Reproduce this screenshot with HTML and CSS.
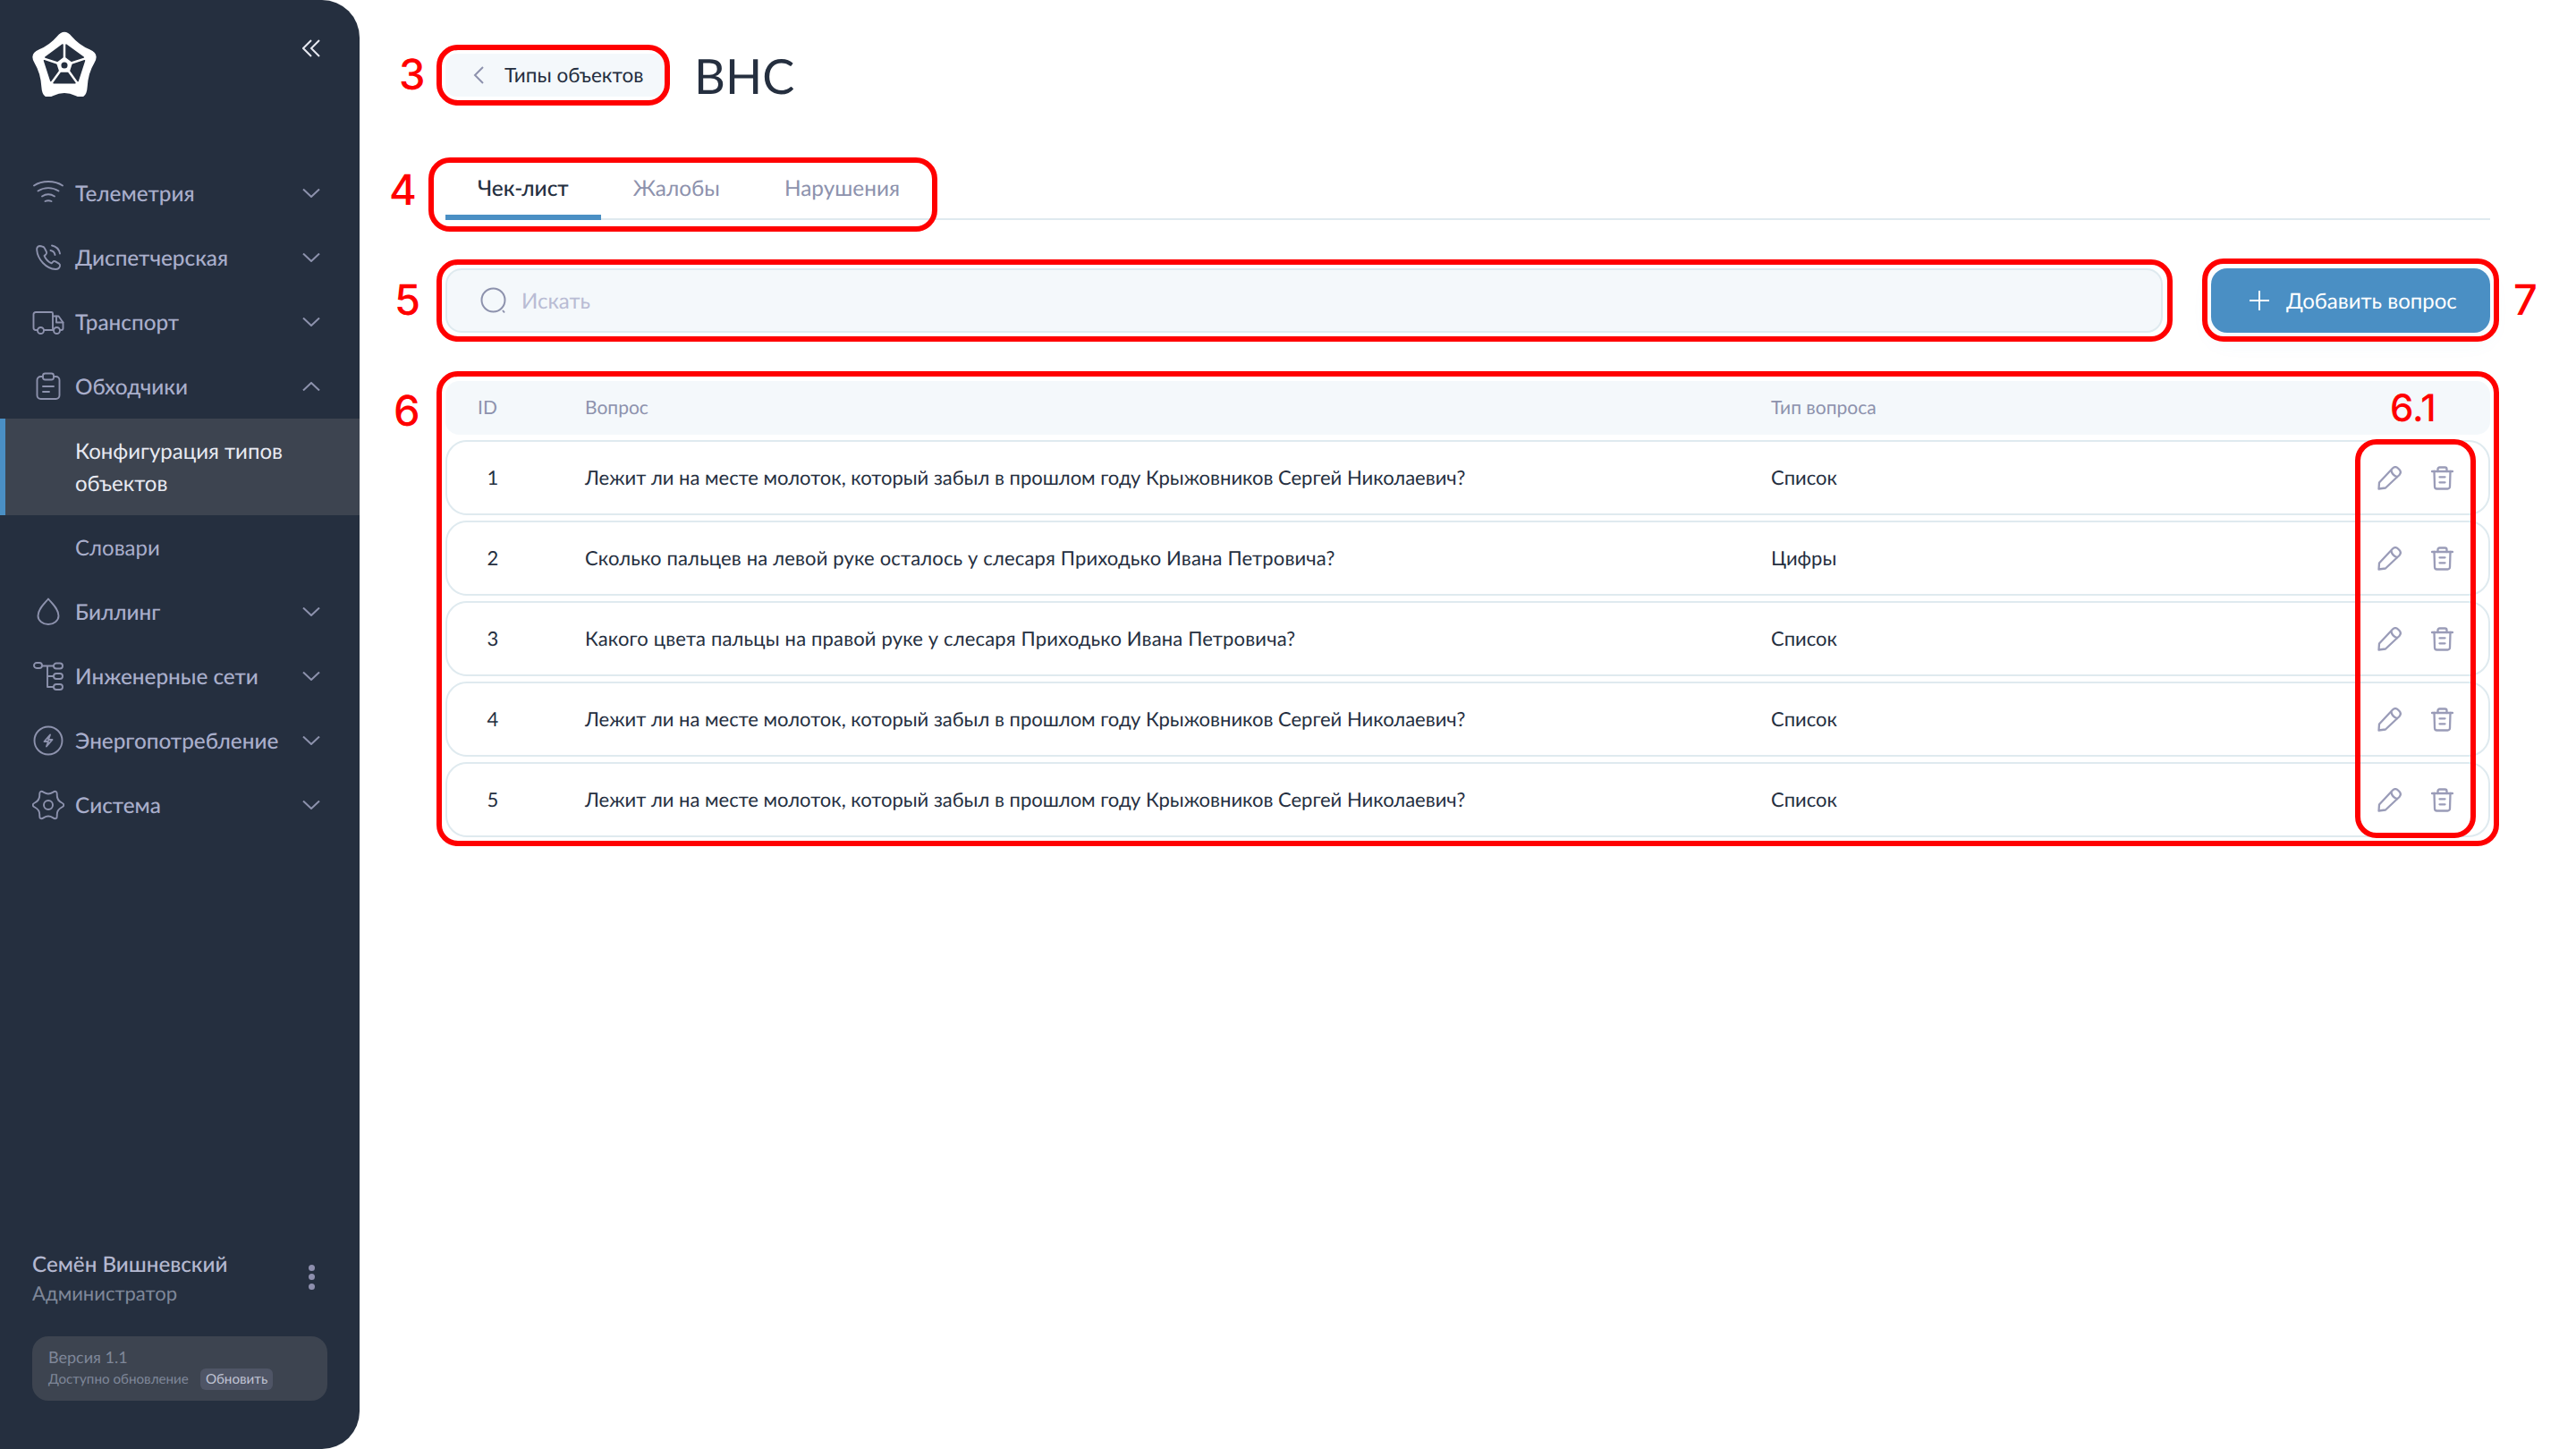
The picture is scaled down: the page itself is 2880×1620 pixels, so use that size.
FILE: index.html
```html
<!DOCTYPE html>
<html lang="ru">

<head>
    <meta charset="UTF-8">
    <meta name="viewport" content="width=device-width, initial-scale=1.0">
    <title>ВНС - Типы объектов</title>
    <link rel="stylesheet" href="styles.css">
</head>

<body>
    <svg class="sprite" aria-hidden="true">
        <symbol id="i-chevron" viewBox="0 0 20 10"><path d="M1 0.5L10 9L19 0.5"/></symbol>
        <symbol id="i-edit" viewBox="0 0 27 27"><path d="M1.500 25.500l.5-7L17 2.500a4.500 4.500 0 0 1 6 0l1.500 1.500a4.500 4.500 0 0 1 0 6L9 24.500z"/><path d="M15.500 5c.5 3 3 6 6.500 7"/></symbol>
        <symbol id="i-trash" viewBox="0 0 25 27"><path d="M1 6h23"/><path d="M7.500 6V3.500A2 2 0 0 1 9.500 1.500h6a2 2 0 0 1 2 2V6"/><path d="M3.500 6l.5 17a2.500 2.500 0 0 0 2.500 2.500h12a2.500 2.500 0 0 0 2.500-2.500l.5-17"/><path d="M9.500 12.300h6M9.500 18.300h6"/></symbol>
    </svg>

    <aside class="sidebar">
        <div class="side-top">
            <svg class="logo" viewBox="0 0 72 73">
                <path fill="#fff" d="M27.750 5.650Q36 -4 44.250 5.650Q52.500 15.300 64.200 20.150Q75.900 25 69.250 35.850Q62.600 46.700 61.650 62.350Q60.700 78 48.350 72Q36 66 23.650 72Q11.300 78 10.350 62.350Q9.400 46.700 2.750 35.850Q-3.900 25 7.800 20.150Q19.500 15.300 27.750 5.650Z"/>
                <g class="logo-cut">
                    <polygon points="38,29 38,15 57.300,29 44,33.300"/>
                    <polygon points="38,29 38,15 57.300,29 44,33.300" transform="rotate(72 36 38)"/>
                    <polygon points="38,29 38,15 57.300,29 44,33.300" transform="rotate(144 36 38)"/>
                    <polygon points="38,29 38,15 57.300,29 44,33.300" transform="rotate(216 36 38)"/>
                    <polygon points="38,29 38,15 57.300,29 44,33.300" transform="rotate(288 36 38)"/>
                    <circle cx="36" cy="38" r="2.800"/>
                </g>
            </svg>
            <svg class="collapse" viewBox="0 0 20 20"><path d="M10 1L1 10l9 9M19 1l-9 9 9 9"/></svg>
        </div>

        <nav class="nav">
            <a class="nav-item">
                <svg class="nav-icon" viewBox="0 0 36 36"><path d="M2 9.500C11 3.500 25 3.500 34 9.500"/><path d="M6.500 15.500c7-4.500 16-4.500 23 0"/><path d="M11 21.500c4.500-2.800 9.500-2.800 14 0"/><path d="M14.500 27c2.200-1 4.800-1 7 0"/></svg>
                <span>Телеметрия</span>
                <svg class="chevron"><use href="#i-chevron"/></svg>
            </a>
            <a class="nav-item">
                <svg class="nav-icon" viewBox="0 0 36 36"><path d="M11 5.500L8.500 5C6.500 5.300 5 7 5.200 9.500c.8 10.500 10.500 21 20.800 21.500 2.500.1 4.500-1.500 5-3.500.3-1.200-.2-2.300-1.200-2.900l-3.800-2.200c-1-.6-2.200-.4-3 .5l-1.300 1.500c-3.600-1.500-6.800-5-8.200-8.500l1.800-1.500c.9-.7 1.100-1.900.6-2.900L13.800 7.300C13.300 6.300 12.300 5.700 11 5.500z"/><path d="M20.500 10c2.500.4 4.500 2.500 5 5M22 4.500c4.500.8 8 4.300 9 9"/></svg>
                <span>Диспетчерская</span>
                <svg class="chevron"><use href="#i-chevron"/></svg>
            </a>
            <a class="nav-item">
                <svg class="nav-icon" viewBox="0 0 36 36"><path d="M6 27H3.500A2.500 2.500 0 0 1 1.500 24.500V9.500A2.500 2.500 0 0 1 4 7h17.500a1.500 1.500 0 0 1 1.500 1.500V27H13"/><path d="M23 11.500h6.500l5 7V25a2 2 0 0 1-2 2H31"/><path d="M23 27h1"/><path d="M27 11.500v7h7.500"/><circle cx="9.500" cy="27.500" r="3.500"/><circle cx="27.500" cy="27.500" r="3.500"/></svg>
                <span>Транспорт</span>
                <svg class="chevron"><use href="#i-chevron"/></svg>
            </a>
            <a class="nav-item">
                <svg class="nav-icon" viewBox="0 0 36 36"><path d="M12 7H9.500A4 4 0 0 0 5.500 11v17a4 4 0 0 0 4 4h17a4 4 0 0 0 4-4V11a4 4 0 0 0-4-4H24"/><rect x="12" y="3.500" width="12" height="7" rx="2.500"/><path d="M12 18h12M12 24h7"/></svg>
                <span>Обходчики</span>
                <svg class="chevron chevron-up"><use href="#i-chevron"/></svg>
            </a>
            <a class="nav-sub nav-sub-active">Конфигурация типов объектов</a>
            <a class="nav-sub">Словари</a>
            <a class="nav-item">
                <svg class="nav-icon" viewBox="0 0 36 36"><path d="M18 3.500C13 9.500 6.500 15 6.500 22.500a11.500 9.500 0 0 0 23 0C29.500 15 23 9.500 18 3.500z"/></svg>
                <span>Биллинг</span>
                <svg class="chevron"><use href="#i-chevron"/></svg>
            </a>
            <a class="nav-item">
                <svg class="nav-icon" viewBox="0 0 36 36"><rect x="2" y="3" width="9" height="6" rx="3"/><rect x="24" y="3.500" width="10" height="6" rx="3"/><rect x="24" y="15" width="10" height="6" rx="3"/><rect x="24" y="27" width="10" height="6" rx="3"/><path d="M11 6.500h13M17 6.500V30h7M17 18h7"/></svg>
                <span>Инженерные сети</span>
                <svg class="chevron"><use href="#i-chevron"/></svg>
            </a>
            <a class="nav-item">
                <svg class="nav-icon" viewBox="0 0 36 36"><circle cx="18" cy="18" r="15.500"/><path d="M20 11.500l-6.500 7.500h4.500L16 24.500l6.500-7.500H18z"/></svg>
                <span>Энергопотребление</span>
                <svg class="chevron"><use href="#i-chevron"/></svg>
            </a>
            <a class="nav-item">
                <svg class="nav-icon" viewBox="0 0 36 36"><circle cx="18" cy="18" r="5"/><path d="M32.750 15.250Q38 18 32.750 20.750Q27.500 23.500 27.750 29.400Q28 35.300 23 32.150Q18 29 13 32.150Q8 35.300 8.250 29.400Q8.500 23.500 3.250 20.750Q-2 18 3.250 15.250Q8.500 12.500 8.250 6.600Q8 .7 13 3.850Q18 7 23 3.850Q28 .7 27.750 6.600Q27.500 12.500 32.750 15.250Z"/></svg>
                <span>Система</span>
                <svg class="chevron"><use href="#i-chevron"/></svg>
            </a>
        </nav>

        <div class="user">
            <div>
                <div class="user-name">Семён Вишневский</div>
                <div class="user-role">Администратор</div>
            </div>
            <div class="dots"><i></i><i></i><i></i></div>
        </div>
        <div class="version">
            <div class="version-num">Версия 1.1</div>
            <div class="version-row">
                <span>Доступно обновление</span>
                <span class="version-btn">Обновить</span>
            </div>
        </div>
    </aside>

    <main class="main">
        <div class="page-head">
            <a class="back-btn">
                <svg viewBox="0 0 12 20"><path d="M11 1L2 10l9 9"/></svg>
                <span>Типы объектов</span>
            </a>
            <h1>ВНС</h1>
        </div>

        <div class="tabs">
            <a class="tab active">Чек-лист</a>
            <a class="tab">Жалобы</a>
            <a class="tab">Нарушения</a>
        </div>

        <div class="toolbar">
            <div class="search">
                <svg viewBox="0 0 30 30"><circle cx="14.500" cy="14.500" r="13"/><path d="M25 26l2 2.500"/></svg>
                <span>Искать</span>
            </div>
            <a class="add-btn">
                <svg viewBox="0 0 22 22"><path d="M11 0v22M0 11h22"/></svg>
                <span>Добавить вопрос</span>
            </a>
        </div>

        <div class="table">
            <div class="grid head-row">
                <div class="th-id">ID</div>
                <div>Вопрос</div>
                <div>Тип вопроса</div>
            </div>
            <div class="grid row">
                <div class="td-id">1</div>
                <div>Лежит ли на месте молоток, который забыл в прошлом году Крыжовников Сергей Николаевич?</div>
                <div>Список</div>
                <div class="actions"><svg class="ic-edit"><use href="#i-edit"/></svg><svg class="ic-trash"><use href="#i-trash"/></svg></div>
            </div>
            <div class="grid row">
                <div class="td-id">2</div>
                <div class="q-wide">Сколько пальцев на левой руке осталось у слесаря Приходько Ивана Петровича?</div>
                <div>Цифры</div>
                <div class="actions"><svg class="ic-edit"><use href="#i-edit"/></svg><svg class="ic-trash"><use href="#i-trash"/></svg></div>
            </div>
            <div class="grid row">
                <div class="td-id">3</div>
                <div class="q-wide">Какого цвета пальцы на правой руке у слесаря Приходько Ивана Петровича?</div>
                <div>Список</div>
                <div class="actions"><svg class="ic-edit"><use href="#i-edit"/></svg><svg class="ic-trash"><use href="#i-trash"/></svg></div>
            </div>
            <div class="grid row">
                <div class="td-id">4</div>
                <div>Лежит ли на месте молоток, который забыл в прошлом году Крыжовников Сергей Николаевич?</div>
                <div>Список</div>
                <div class="actions"><svg class="ic-edit"><use href="#i-edit"/></svg><svg class="ic-trash"><use href="#i-trash"/></svg></div>
            </div>
            <div class="grid row">
                <div class="td-id">5</div>
                <div>Лежит ли на месте молоток, который забыл в прошлом году Крыжовников Сергей Николаевич?</div>
                <div>Список</div>
                <div class="actions"><svg class="ic-edit"><use href="#i-edit"/></svg><svg class="ic-trash"><use href="#i-trash"/></svg></div>
            </div>
        </div>
    </main>

    <!-- red callouts drawn over the screen -->
    <div class="mark box-3"></div>
    <div class="mark box-4"></div>
    <div class="mark box-5"></div>
    <div class="mark box-6"></div>
    <div class="mark box-61"></div>
    <div class="mark box-7"></div>
    <div class="mark-num num-3">3</div>
    <div class="mark-num num-4">4</div>
    <div class="mark-num num-5">5</div>
    <div class="mark-num num-6">6</div>
    <div class="mark-num num-61">6.1</div>
    <div class="mark-num num-7">7</div>
</body>

</html>
```
FILE: styles.css
```css
* {
    margin: 0;
    padding: 0;
    box-sizing: border-box;
    font-family: 'Lato', 'Noto Sans', sans-serif;
}

body {
    position: relative;
    display: flex;
    width: 2880px;
    height: 1620px;
    overflow: hidden;
    background-color: #fff;
    color: #252f3f;
    text-rendering: geometricPrecision;
}

.sprite {
    display: none;
}

svg {
    fill: none;
    flex-shrink: 0;
}

/* sidebar */
.sidebar {
    display: flex;
    flex-direction: column;
    width: 402px;
    height: 1620px;
    background-color: #252f3f;
    border-radius: 0 42px 42px 0;
}

.side-top {
    display: flex;
    justify-content: space-between;
    align-items: flex-start;
    padding: 35px 44px 0 36px;
    height: 180px;
}

.logo {
    width: 72px;
    height: 73px;
}

.logo-cut {
    fill: #252f3f;
    stroke: #252f3f;
    stroke-width: 1.5;
    stroke-linejoin: round;
}

.collapse {
    width: 20px;
    height: 20px;
    margin-top: 9px;
    stroke: #e6e8f0;
    stroke-width: 2;
}

.nav-item {
    display: flex;
    align-items: center;
    height: 72px;
    padding: 0 44px 0 36px;
    color: #a9aecb;
    font-size: 24.300px;
    font-weight: 500;
}

.nav-item span {
    flex: 1;
    margin-left: 12px;
}

.nav-icon {
    width: 36px;
    height: 36px;
    stroke: #8d92ad;
    stroke-width: 1.900;
    stroke-linecap: round;
    stroke-linejoin: round;
}

.chevron {
    width: 20px;
    height: 10px;
    stroke: #8d92ad;
    stroke-width: 2;
}

.chevron-up {
    transform: rotate(180deg);
}

.nav-sub {
    display: flex;
    align-items: center;
    height: 72px;
    padding: 2px 44px 0 84px;
    color: #a9aecb;
    font-size: 24px;
    line-height: 36px;
}

.nav-sub-active {
    height: 108px;
    background-color: #3d4450;
    border-left: 6px solid #4a8fc4;
    padding-left: 78px;
    padding-right: 60px;
    color: #e8eaf2;
}

.user {
    display: flex;
    justify-content: space-between;
    align-items: center;
    margin-top: auto;
    padding: 0 44px 0 36px;
}

.user-name {
    color: #b4b8d0;
    font-size: 24.200px;
    font-weight: 500;
    line-height: 32px;
}

.user-role {
    color: #7f8799;
    font-size: 22px;
    line-height: 32px;
}

.dots {
    display: flex;
    flex-direction: column;
    gap: 3.500px;
    margin: 0 6px 5px 0;
}

.dots i {
    display: block;
    width: 7px;
    height: 7px;
    border-radius: 50%;
    background-color: #8e8fae;
}

.version {
    width: 330px;
    height: 72px;
    margin: 32px 0 54px 36px;
    padding: 11px 18px 0;
    background-color: #3d4450;
    border-radius: 18px;
    color: #7f8799;
}

.version-num {
    font-size: 18px;
    line-height: 24px;
}

.version-row {
    display: flex;
    align-items: center;
    gap: 13px;
    margin-top: 1px;
    font-size: 15.200px;
}

.version-btn {
    padding: 3px 6px;
    background-color: #4f5566;
    border-radius: 6px;
    color: #c0c4d4;
}

/* main area */
.main {
    flex: 1;
    padding: 60px 96px 0;
}

.page-head {
    display: flex;
    align-items: center;
    gap: 33px;
    height: 48px;
}

.back-btn {
    display: flex;
    align-items: center;
    gap: 23px;
    width: 245px;
    height: 48px;
    padding-left: 31px;
    background-color: #f4f8fb;
    border-radius: 12px;
    font-size: 22.500px;
}

.back-btn span {
    padding-bottom: 2px;
}

.back-btn svg {
    width: 12px;
    height: 20px;
    stroke: #8d92ad;
    stroke-width: 2;
}

h1 {
    font-size: 54px;
    font-weight: 400;
}

.tabs {
    display: flex;
    height: 62px;
    margin-top: 76px;
    border-bottom: 2px solid #dfeaef;
}

.tab {
    height: 62px;
    padding: 12px 36px 0;
    color: #8d92ad;
    font-size: 24.400px;
}

.tab.active {
    color: #252f3f;
    font-weight: 500;
    border-bottom: 6px solid #4a8fc4;
}

.toolbar {
    display: flex;
    gap: 54px;
    margin-top: 54px;
}

.search {
    flex: 1;
    display: flex;
    align-items: center;
    gap: 16px;
    height: 72px;
    padding-left: 37px;
    background-color: #f4f8fb;
    border: 2px solid #dfeaef;
    border-radius: 18px;
    color: #b9bcd4;
    font-size: 24px;
}

.search svg {
    width: 30px;
    height: 30px;
    stroke: #8d92ad;
    stroke-width: 2;
}

.add-btn {
    display: flex;
    align-items: center;
    gap: 19px;
    width: 312px;
    height: 72px;
    padding-left: 43px;
    background-color: #4a8fc4;
    border-radius: 18px;
    box-shadow: 0 10px 24px rgba(74, 143, 196, 0.06);
    color: #fff;
    font-size: 24px;
}

.add-btn svg {
    width: 22px;
    height: 22px;
    stroke: #fff;
    stroke-width: 2;
}

.table {
    display: flex;
    flex-direction: column;
    gap: 6px;
    margin-top: 54px;
}

.grid {
    display: grid;
    grid-template-columns: 102px 1274px 1fr auto;
    column-gap: 52px;
    align-items: center;
    border: 2px solid transparent;
}

.head-row {
    height: 60px;
    padding-bottom: 2px;
    background-color: #f4f8fb;
    border-radius: 15px;
    color: #8d92ad;
    font-size: 21px;
}

.th-id {
    padding-left: 34px;
}

.row {
    height: 84px;
    padding-bottom: 2px;
    border-color: #dfeaef;
    border-radius: 24px;
    font-size: 22px;
}

.q-wide {
    letter-spacing: 0.16px;
}

.td-id {
    text-align: center;
}

.actions {
    display: flex;
    align-items: center;
    gap: 33px;
    margin-top: 2px;
    padding-right: 39px;
}

.actions svg {
    height: 27px;
    stroke: #9a9cb8;
    stroke-width: 2.300;
    stroke-linecap: round;
    stroke-linejoin: round;
}

.ic-edit {
    width: 27px;
}

.ic-trash {
    width: 25px;
}

/* callouts */
.mark {
    position: absolute;
    border: 6px solid #ff0000;
    border-radius: 24px;
}

.box-3 {
    left: 488px;
    top: 50px;
    width: 261px;
    height: 68px;
}

.box-4 {
    left: 479px;
    top: 176px;
    width: 569px;
    height: 83px;
}

.box-5 {
    left: 488px;
    top: 290px;
    width: 1941px;
    height: 92px;
}

.box-6 {
    left: 488px;
    top: 415px;
    width: 2306px;
    height: 531px;
}

.box-61 {
    left: 2633px;
    top: 491px;
    width: 135px;
    height: 446px;
}

.box-7 {
    left: 2462px;
    top: 289px;
    width: 332px;
    height: 93px;
}

.mark-num {
    position: absolute;
    color: #ff0000;
    font-family: 'Inter', sans-serif;
    font-size: 47px;
    font-weight: 500;
    line-height: 48px;
}

.num-3 {
    left: 446px;
    top: 60px;
}

.num-4 {
    left: 435px;
    top: 189px;
}

.num-5 {
    left: 441px;
    top: 312px;
}

.num-6 {
    left: 440px;
    top: 436px;
}

.num-61 {
    left: 2672px;
    top: 436px;
    font-size: 42px;
    line-height: 41px;
}

.num-7 {
    left: 2810px;
    top: 312px;
}
```
